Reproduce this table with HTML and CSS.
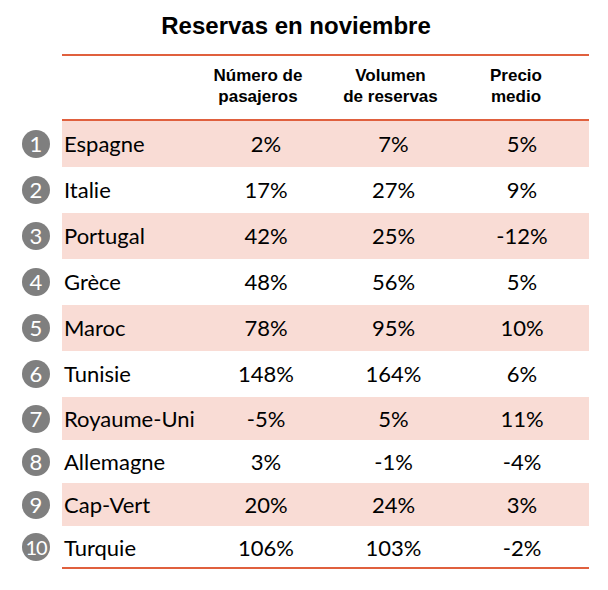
FILE: index.html
```html
<!DOCTYPE html>
<html lang="es">
<head>
<meta charset="utf-8">
<title>Reservas en noviembre</title>
<link rel="stylesheet" href="styles.css">
</head>
<body>
<div class="page">
  <h1 class="title">Reservas en noviembre</h1>
  <div class="table">
    <div class="head">
      <div class="hcell hcountry"></div>
      <div class="hcell h1">Número de<br>pasajeros</div>
      <div class="hcell h2">Volumen<br>de reservas</div>
      <div class="hcell h3">Precio<br>medio</div>
    </div>
    <div class="row shaded"><span class="badge">1</span><div class="cell country">Espagne</div><div class="cell c1">2%</div><div class="cell c2">7%</div><div class="cell c3">5%</div></div>
    <div class="row"><span class="badge">2</span><div class="cell country">Italie</div><div class="cell c1">17%</div><div class="cell c2">27%</div><div class="cell c3">9%</div></div>
    <div class="row shaded"><span class="badge">3</span><div class="cell country">Portugal</div><div class="cell c1">42%</div><div class="cell c2">25%</div><div class="cell c3">-12%</div></div>
    <div class="row"><span class="badge">4</span><div class="cell country">Grèce</div><div class="cell c1">48%</div><div class="cell c2">56%</div><div class="cell c3">5%</div></div>
    <div class="row shaded"><span class="badge">5</span><div class="cell country">Maroc</div><div class="cell c1">78%</div><div class="cell c2">95%</div><div class="cell c3">10%</div></div>
    <div class="row"><span class="badge">6</span><div class="cell country">Tunisie</div><div class="cell c1">148%</div><div class="cell c2">164%</div><div class="cell c3">6%</div></div>
    <div class="row shaded short"><span class="badge">7</span><div class="cell country">Royaume-Uni</div><div class="cell c1">-5%</div><div class="cell c2">5%</div><div class="cell c3">11%</div></div>
    <div class="row short"><span class="badge">8</span><div class="cell country">Allemagne</div><div class="cell c1">3%</div><div class="cell c2">-1%</div><div class="cell c3">-4%</div></div>
    <div class="row shaded short"><span class="badge">9</span><div class="cell country">Cap-Vert</div><div class="cell c1">20%</div><div class="cell c2">24%</div><div class="cell c3">3%</div></div>
    <div class="row short last"><span class="badge two">10</span><div class="cell country">Turquie</div><div class="cell c1">106%</div><div class="cell c2">103%</div><div class="cell c3">-2%</div></div>
  </div>
</div>
</body>
</html>
```

FILE: styles.css
```css
html, body {
  margin: 0;
  padding: 0;
  background: #ffffff;
}

.page {
  width: 608px;
  height: 590px;
  overflow: hidden;
}

.title {
  margin: 12px 16px 0 0;
  height: 28px;
  line-height: 28px;
  text-align: center;
  font-family: "Liberation Sans", Arial, sans-serif;
  font-weight: bold;
  font-size: 24px;
  color: #000;
}

.table {
  margin: 14px 0 0 62px;
  width: 527px;
  border-top: 2px solid #e0603e;
  border-bottom: 2px solid #e0603e;
}

.head {
  display: flex;
  height: 63px;
  border-bottom: 2px solid #e0603e;
  font-family: "Liberation Sans", Arial, sans-serif;
  font-weight: bold;
  font-size: 17px;
  line-height: 21px;
  color: #000;
}

.hcell {
  padding-top: 9px;
  text-align: center;
}

.hcountry { width: 138px; }
.h1 { width: 132px; margin-left: -8px; margin-right: 8px; }
.h2 { width: 123px; margin-left: -3px; margin-right: 3px; }
.h3 { width: 134px; margin-left: -6px; margin-right: 6px; }

.row {
  display: flex;
  align-items: center;
  height: 46px;
  font-family: "Lato", "Open Sans", sans-serif;
  font-size: 22px;
  color: #000;
}

.row.short { height: 43px; }
.row.last { height: 41px; }
.row.last .cell { padding-top: 3px; }

.shaded { background: #f9dcd5; }

.badge {
  flex: none;
  width: 28px;
  height: 28px;
  margin-left: -40px;
  margin-right: 12px;
  border-radius: 50%;
  background: #7f7f7f;
  color: #fff;
  font-size: 22px;
  line-height: 28px;
  text-align: center;
}

.badge.two {
  font-size: 20px;
  letter-spacing: -1px;
}

.cell {
  flex: none;
  line-height: 26px;
}

.country {
  width: 136px;
  padding-left: 2px;
}

.c1 { width: 132px; text-align: center; }
.c2 { width: 123px; text-align: center; }
.c3 { width: 134px; text-align: center; }
```
